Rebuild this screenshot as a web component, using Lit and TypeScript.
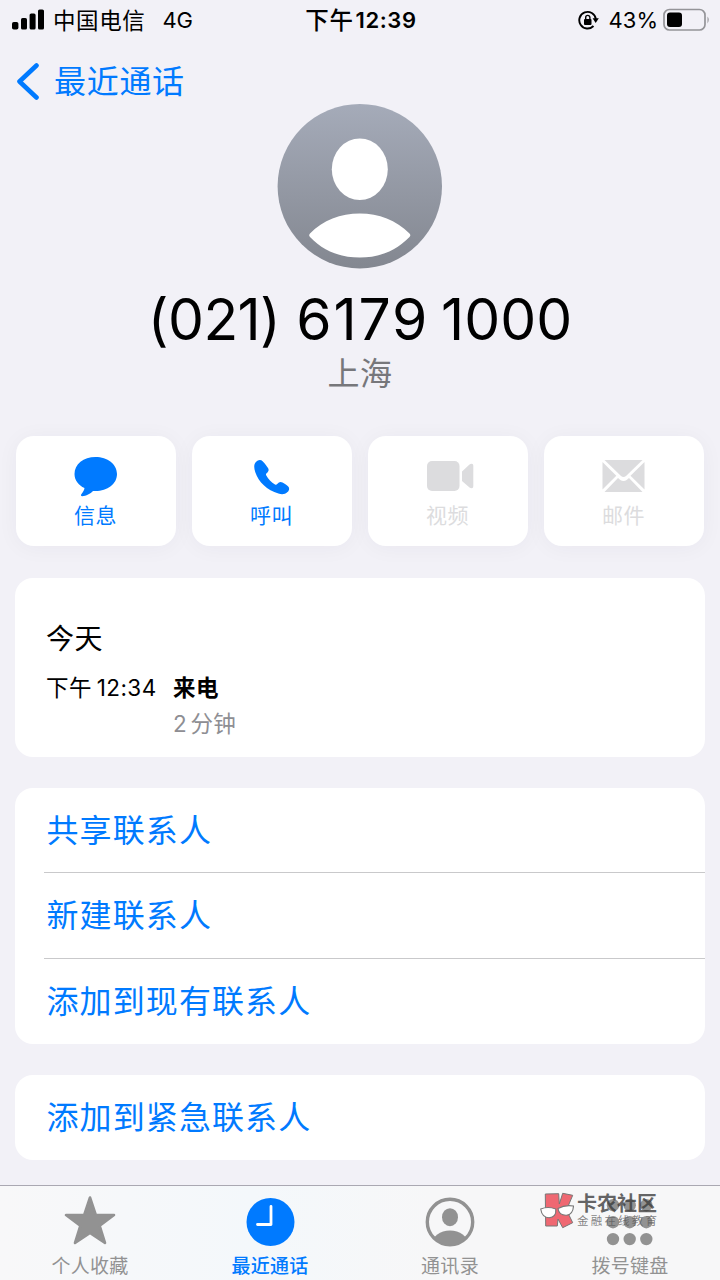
import { LitElement, css, html, svg } from "lit";
import { customElement, property } from "lit/decorators.js";
import { classMap } from "lit/directives/class-map.js";

const icons = {
	message: svg`<path d="M21.500 2C33.500 2 43 9 43 19C43 29 33.500 36 21.500 36L19 35.900C16.500 38.500 12 41 8.300 41.200C6.900 41.200 6.500 40.200 7.500 39C9 37.300 10.300 35 10.500 33.100C4.500 30.300 0.500 25.200 0.500 19C0.500 9 9.500 2 21.500 2Z"/>`,
	call: svg`<path d="M5.900 7C8 4.700 10.800 4.300 12.600 6.200C15 8.600 16.600 11 18 13.100C19.200 15 18.600 16.400 16.600 18.300C15.900 19 15.800 19.700 16.300 20.600C18 24 21.500 27.600 25 29.400C25.900 29.900 26.600 29.700 27.200 29C29 26.900 30.500 26.400 32.500 27.500C34.900 28.900 37 30.400 38.200 31.400C39.800 33 39.200 35.400 37.500 37.100C35 39.400 32.100 39.900 28.400 38.600C17.200 35.200 8.500 27.200 5.300 17.300C3.700 12.500 3.900 9.200 5.900 7Z"/>`,
	video: svg`<rect x="0" y="6" width="32.500" height="30" rx="5"/><path d="M35 16.500L42.500 9.500Q44 8.500 45.600 9Q46.300 9.300 46.300 11V31Q46.300 32.700 45.600 33Q44 33.500 42.500 32.500L35 26Z"/>`,
	mail: svg`<path d="M2.500 5H40.500L24 21Q21.500 23 19 21Z"/><path d="M0.500 7L14.300 20.700L0.500 34.400Z"/><path d="M42.500 7V34.400L28.500 20.700Z"/><path d="M2.500 37L16 23L18.300 25Q21.500 27.200 24.700 25L27 23L40.500 37Z"/>`,
	star: svg`<path d="M27 3.500L32.800 21H51L36.700 31.800L42 49L27 38.800L12 49L17.300 31.800L3 21H21.200Z" stroke="currentColor" stroke-width="2.600" stroke-linejoin="round"/>`,
	clock: svg`<circle cx="27.500" cy="28" r="24"/><path d="M28 12.500V30.500H14.500" fill="none" stroke="#fff" stroke-width="2.800" stroke-linecap="round" stroke-linejoin="round"/>`,
	person: svg`<clipPath id="disc"><circle cx="27" cy="28" r="23"/></clipPath><circle cx="27" cy="28" r="22.700" fill="none" stroke="currentColor" stroke-width="3.400"/><ellipse cx="27" cy="23.200" rx="8" ry="9"/><ellipse cx="27" cy="50" rx="18" ry="13.500" clip-path="url(#disc)"/>`,
	keypad: svg`${[11.2, 28.2, 45.1].map((y) =>
		[10, 26.7, 43.3].map((x) => svg`<circle cx=${x} cy=${y} r="6.200"/>`)
	)}`,
};

type IconName = keyof typeof icons;

@customElement("status-bar")
export class StatusBar extends LitElement {
	static styles = css`
		:host {
			display: grid;
			grid-template-columns: 1fr auto 1fr;
			align-items: center;
			height: 40px;
			padding: 0 10px 0 12px;
			box-sizing: border-box;
			color: #000;
			font-size: 22px;
		}

		svg {
			display: block;
			flex: none;
		}

		.left,
		.right,
		.time {
			display: flex;
			align-items: center;
		}

		.carrier {
			margin: 0 0 2px 9px;
			font-size: 22.5px;
			letter-spacing: 0.6px;
		}

		.network {
			margin-left: 17px;
		}

		.time {
			font-weight: 600;
			gap: 2px;
			letter-spacing: 0.6px;
		}

		.meridiem {
			margin-bottom: 2px;
			font-weight: 500;
			font-size: 23.5px;
		}

		.right {
			justify-content: flex-end;
		}

		.percent {
			margin: 0 5px 0 10px;
		}
	`;

	render() {
		return html`
			<div class="left">
				<svg width="32" height="22" viewBox="0 0 32 22">
					<rect x="0" y="13" width="6.400" height="7.500" rx="1.800" />
					<rect x="9" y="9" width="6" height="11.500" rx="1.600" />
					<rect x="17.600" y="4.500" width="6" height="16" rx="1.600" />
					<rect x="26" y="0.500" width="6" height="20" rx="1.600" />
				</svg>
				<span class="carrier">中国电信</span>
				<span class="network">4G</span>
			</div>
			<div class="time"><span class="meridiem">下午</span><span>12:39</span></div>
			<div class="right">
				<svg width="21" height="20" viewBox="0 0 21 20">
					<path
						d="M15.500 16A8.300 8.300 0 1 1 17.800 9"
						fill="none"
						stroke="#000"
						stroke-width="1.900"
					/>
					<path d="M14.600 8.300H20.800L17.700 12.900Z" />
					<rect x="6" y="9" width="7.500" height="6" rx="1" />
					<path d="M7.700 9.500V7.500a2.100 2.100 0 0 1 4.200 0V9.500" fill="none" stroke="#000" stroke-width="1.400" />
				</svg>
				<span class="percent">43%</span>
				<svg width="47" height="24" viewBox="0 0 47 24">
					<rect x="1" y="1.500" width="41" height="20.500" rx="5.500" fill="none" stroke="#949498" stroke-width="1.700" />
					<rect x="4" y="4.500" width="15" height="14.500" rx="3" />
					<path d="M44.500 8.500Q47 11.500 44.500 15.500Z" fill="#949498" />
				</svg>
			</div>
		`;
	}
}

@customElement("action-tile")
export class ActionTile extends LitElement {
	static styles = css`
		:host {
			display: flex;
			flex-direction: column;
			align-items: center;
			height: 110px;
			padding: 19px 1px 0 0;
			box-sizing: border-box;
			border-radius: 18px;
			background: #fff;
			box-shadow: 0 2px 22px rgba(40, 30, 80, 0.045);
			color: #007aff;
		}

		:host([disabled]) {
			color: #dcdcde;
		}

		svg {
			display: block;
			fill: currentColor;
		}

		.label {
			margin-top: 3px;
			line-height: 32px;
			font-size: 21px;
			letter-spacing: 0.4px;
		}
	`;

	@property() icon: IconName = "message";
	@property() label = "";
	@property({ type: Boolean, reflect: true }) disabled = false;

	render() {
		const width = this.icon === "video" ? 41 : 44;
		return html`
			<svg width=${width} height="42" viewBox="0 0 ${width} 42" overflow="visible">
				${icons[this.icon]}
			</svg>
			<span class="label">${this.label}</span>
		`;
	}
}

@customElement("tab-bar")
export class TabBar extends LitElement {
	static styles = css`
		:host {
			display: grid;
			grid-template-columns: repeat(4, 1fr);
			position: relative;
			height: 95px;
			box-sizing: border-box;
			border-top: 1px solid #aaa8b2;
			background: linear-gradient(90deg, #f8f8f9, #f4f8fb 35%, #f7f7f8 60%, #f7f7f8);
		}

		.tab {
			display: flex;
			flex-direction: column;
			align-items: center;
			padding-top: 8px;
			color: #929292;
			font-size: 19px;
		}

		.tab svg {
			display: block;
			fill: currentColor;
		}

		.label {
			line-height: 24px;
			margin-top: 7px;
			letter-spacing: 0.3px;
		}

		.active {
			color: #007aff;
			font-weight: 500;
		}

		.watermark {
			position: absolute;
			left: 540px;
			top: 6px;
			display: flex;
			gap: 3px;
			color: rgba(60, 60, 60, 0.78);
		}

		.brand {
			display: flex;
			flex-direction: column;
			padding-top: 1px;
			white-space: nowrap;
		}

		.name {
			font-size: 20px;
			font-weight: 700;
			line-height: 23px;
		}

		.slogan {
			font-size: 11.5px;
			line-height: 11px;
			letter-spacing: 2.2px;
			color: rgba(90, 90, 90, 0.75);
		}
	`;

	tabs: { icon: IconName; label: string; active?: boolean }[] = [
		{ icon: "star", label: "个人收藏" },
		{ icon: "clock", label: "最近通话", active: true },
		{ icon: "person", label: "通讯录" },
		{ icon: "keypad", label: "拨号键盘" },
	];

	render() {
		return html`
			${this.tabs.map(
				(tab) => html`
					<div class=${classMap({ tab: true, active: !!tab.active })}>
						<svg width="54" height="54" viewBox="0 0 54 54">${icons[tab.icon]}</svg>
						<span class="label">${tab.label}</span>
					</div>
				`
			)}
			<div class="watermark">
				<svg width="34" height="37" viewBox="0 0 34 37">
					<path
						d="M5.300 2L18.700 1.700L19.300 12L22.700 1.300L32.700 3.300L26.500 18L32.700 30.700L22.700 35.700L18 27L17.300 34H5.700Z"
						fill="#ef6872"
						stroke="#777"
						stroke-width="1"
					/>
					<g fill="#fff" stroke="#777" stroke-width="1.100">
						<path d="M0.700 17Q8 14 15.800 17Q16.500 25.500 9 25.700Q2 25.500 0.700 17Z" />
						<path d="M18 16.500Q25 12.500 33.500 14Q33 22.500 26.500 23.200Q19 23.500 18 16.500Z" />
					</g>
				</svg>
				<div class="brand">
					<span class="name">卡农社区</span>
					<span class="slogan">金融在线教育</span>
				</div>
			</div>
		`;
	}
}

@customElement("app-root")
export class AppRoot extends LitElement {
	static styles = css`
		:host {
			display: flex;
			flex-direction: column;
			width: 720px;
			height: 1280px;
			overflow: hidden;
			background: #f2f1f7;
			color: #000;
			font-family: Inter, "Noto Sans CJK SC", sans-serif;
		}

		.back {
			display: flex;
			align-items: center;
			gap: 14px;
			height: 64px;
			padding: 19px 0 0 16px;
			box-sizing: border-box;
			color: #007aff;
			font-size: 32px;
			line-height: 47px;
			letter-spacing: 0.7px;
		}

		.hero {
			display: flex;
			flex-direction: column;
			align-items: center;
			height: 332px;
		}

		.hero svg {
			display: block;
		}

		.number {
			display: flex;
			gap: 16px;
			margin-top: 16px;
			font-size: 57px;
			line-height: 70px;
			white-space: nowrap;
			font-feature-settings: "calt" 0;
		}

		.area {
			letter-spacing: -0.6px;
		}

		.exchange {
			letter-spacing: 1.8px;
			margin-right: -4px;
		}

		.place {
			line-height: 38px;
			font-size: 32px;
			letter-spacing: 0.6px;
			color: #77777b;
		}

		.actions {
			display: grid;
			grid-template-columns: repeat(4, 1fr);
			gap: 16px;
			padding: 0 16px;
		}

		.card {
			margin: 0 15px;
			border-radius: 18px;
			background: #fff;
			overflow: hidden;
			flex: none;
		}

		.history {
			height: 179px;
			margin-top: 32px;
			padding: 41px 32px 0 31px;
			box-sizing: border-box;
		}

		.day {
			font-size: 28px;
			line-height: 40px;
			letter-spacing: 0.6px;
		}

		.call {
			display: grid;
			grid-template-columns: 127px 1fr;
			margin-top: 11px;
			font-size: 22.5px;
			line-height: 36px;
		}

		.when {
			display: flex;
			gap: 5px;
			letter-spacing: 0.4px;
		}

		.kind {
			font-weight: 600;
			letter-spacing: 0.4px;
		}

		.duration {
			grid-column: 2;
			color: #8e8e93;
			word-spacing: -3px;
			letter-spacing: 0.2px;
		}

		.links {
			margin-top: 31px;
		}

		.link {
			height: 85.3px;
			box-sizing: border-box;
			margin-left: 29px;
			padding-left: 2.5px;
			line-height: 86px;
			font-size: 32px;
			letter-spacing: 1.1px;
			color: #007aff;
		}

		.link:not(:last-child) {
			border-bottom: 1px solid #c9c9cb;
		}

		tab-bar {
			margin-top: auto;
			flex: none;
		}
	`;

	groups = [["共享联系人", "新建联系人", "添加到现有联系人"], ["添加到紧急联系人"]];

	render() {
		return html`
			<status-bar></status-bar>
			<div class="back">
				<svg width="24" height="38" viewBox="0 0 24 38">
					<path
						d="M20.500 2.500L3.500 18.500L20.500 34.500"
						fill="none"
						stroke="currentColor"
						stroke-width="4.600"
						stroke-linecap="round"
						stroke-linejoin="round"
					/>
				</svg>
				<span>最近通话</span>
			</div>
			<div class="hero">
				<svg width="166" height="165" viewBox="0 0 166 165">
					<defs>
						<linearGradient id="shade" x2="0" y2="1">
							<stop offset="0" stop-color="#a5abb9" />
							<stop offset="1" stop-color="#838790" />
						</linearGradient>
					</defs>
					<circle cx="82.800" cy="82.200" r="82.200" fill="url(#shade)" />
					<ellipse cx="82.800" cy="65.300" rx="28" ry="30.800" fill="#fff" />
					<path
						d="M33 129.500Q31.300 131.300 33 133C46 147 63 153.500 82.800 153.500S119 147 132.500 133Q134.200 131.300 132.500 129.500C119 116 102 109.500 82.800 109.500S46 116 33 129.500Z"
						fill="#fff"
					/>
				</svg>
				<div class="number">
					<span class="area">(021)</span>
					<span class="exchange">6179</span>
					<span>1000</span>
				</div>
				<div class="place">上海</div>
			</div>
			<div class="actions">
				<action-tile icon="message" label="信息"></action-tile>
				<action-tile icon="call" label="呼叫"></action-tile>
				<action-tile icon="video" label="视频" disabled></action-tile>
				<action-tile icon="mail" label="邮件" disabled></action-tile>
			</div>
			<div class="card history">
				<div class="day">今天</div>
				<div class="call">
					<div class="when"><span>下午</span><span>12:34</span></div>
					<div class="kind">来电</div>
					<div class="duration">2 分钟</div>
				</div>
			</div>
			${this.groups.map(
				(links) => html`
					<div class="card links">
						${links.map((link) => html`<div class="link">${link}</div>`)}
					</div>
				`
			)}
			<tab-bar></tab-bar>
		`;
	}
}
